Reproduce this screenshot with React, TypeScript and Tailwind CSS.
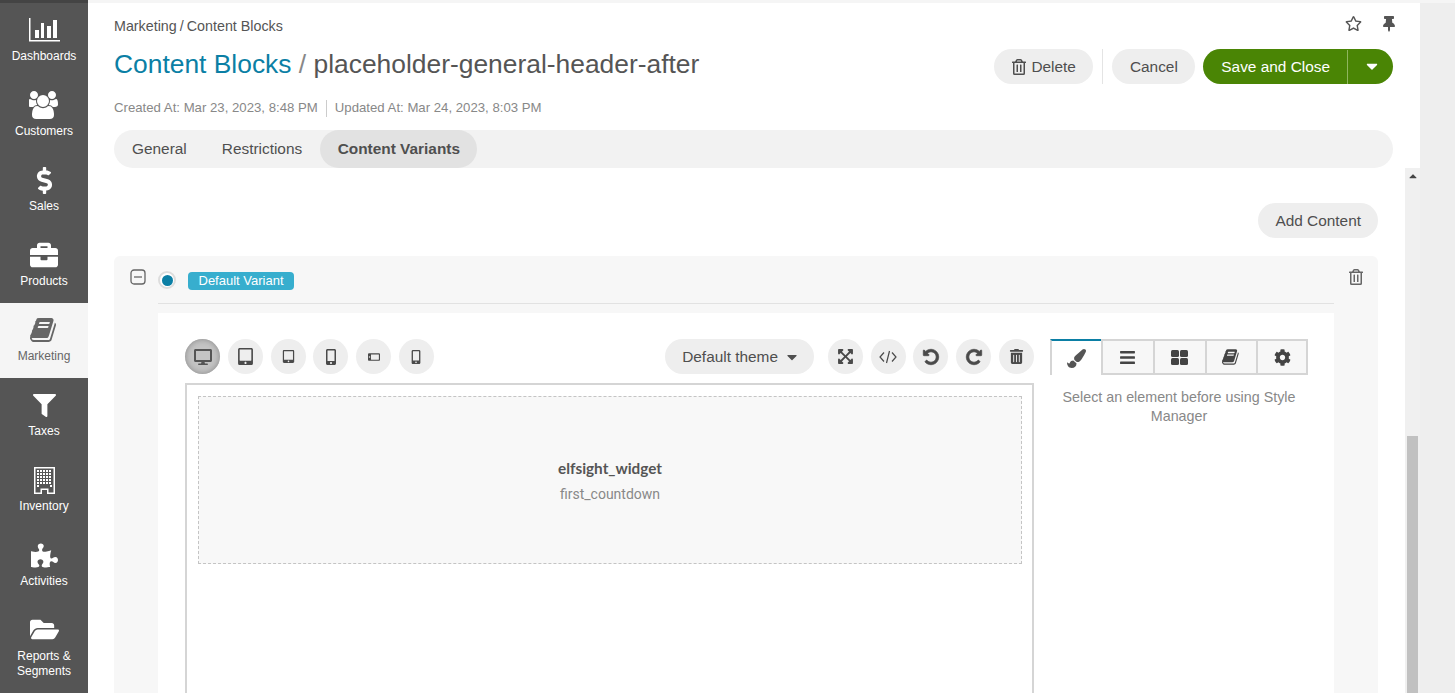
import type { ReactNode } from "react";
import {
  FaBars,
  FaBriefcase,
  FaCaretDown,
  FaCaretUp,
  FaCog,
  FaDesktop,
  FaDollarSign,
  FaExpandArrowsAlt,
  FaFilter,
  FaFolderOpen,
  FaMobileAlt,
  FaPaintBrush,
  FaPuzzlePiece,
  FaRegStar,
  FaRegTrashAlt,
  FaTabletAlt,
  FaThumbtack,
  FaTrashAlt,
} from "react-icons/fa";

function ChartIcon() {
  return (
    <svg width="31" height="24" viewBox="0 0 31 24" fill="currentColor">
      <path d="M0 0h1.5v22H31v1.5H0z" />
      <rect x="6" y="12" width="4" height="8" />
      <rect x="12" y="5" width="3" height="15" />
      <rect x="18" y="8" width="4" height="12" />
      <rect x="24" y="2" width="4" height="18" />
    </svg>
  );
}

function BuildingIcon() {
  const cells = [3, 6, 9, 12, 15];
  return (
    <svg width="21" height="27" viewBox="0 0 21 27" fill="currentColor">
      <path d="M0 0h21v27H13v-4H8v4H0zM1.5 1.5v24H6.5v-4h8v4h5v-24z" />
      {cells.map((x) =>
        cells.map((y) => <rect key={`${x}-${y}`} x={x} y={y} width="2" height="2" />)
      )}
      <rect x="3" y="18" width="2" height="2" />
      <rect x="16" y="18" width="2" height="2" />
    </svg>
  );
}

function CodeIcon() {
  return (
    <svg width="18" height="14" viewBox="0 0 18 14" fill="none" stroke="currentColor" strokeWidth="1.2">
      <path d="M5 2.5 1 7l4 4.5M13 2.5 17 7l-4 4.5M10.5 1 7.5 13" />
    </svg>
  );
}

function CollapseIcon() {
  return (
    <svg width="16" height="16" viewBox="0 0 16 16" fill="none" stroke="currentColor" strokeWidth="1.3">
      <rect x="1" y="1" width="14" height="14" rx="3" />
      <path d="M4 8h8" />
    </svg>
  );
}

function GridIcon() {
  return (
    <svg width="17" height="15" viewBox="0 0 17 15" fill="currentColor">
      <rect width="8" height="7" rx="1.5" />
      <rect x="9" width="8" height="7" rx="1.5" />
      <rect y="8" width="8" height="7" rx="1.5" />
      <rect x="9" y="8" width="8" height="7" rx="1.5" />
    </svg>
  );
}

function BookIcon({ size }: { size: number }) {
  return (
    <svg width={size} height={size} viewBox="0 0 1792 1792" fill="currentColor">
      <path d="M1639 478q40 57 18 129l-275 906q-19 64-76.5 107.5t-122.5 43.5h-923q-77 0-148.5-53.5t-99.5-131.5q-24-67-2-127 0-4 3-27t4-37q1-8-3-21.5t-3-19.5q2-11 8-21t16.5-23.5 16.5-23.5q23-38 45-91.5t30-91.5q3-10 .5-30t-.5-28q3-11 17-28t17-23q21-36 42-92t25-90q1-9-2.5-32t.5-28q4-13 22-30.5t22-22.5q19-26 42.5-84.5t27.5-96.5q1-8-3-25.5t-2-26.5q2-8 9-18t18-23 17-21q8-12 16.5-30.5t15-35 16-36 19.5-32 26.5-23.5 36-11.5 47.5 5.5l-1 3q38-9 51-9h761q74 0 114 56t18 130l-274 906q-36 119-71.5 153.5t-128.5 34.5h-869q-27 0-38 15-11 16-1 43 24 70 144 70h923q29 0 56-15.5t35-41.5l300-987q7-22 5-57 38 15 59 43zm-1064 2q-4 13 2 22.5t20 9.5h608q13 0 25.5-9.5t16.5-22.5l21-64q4-13-2-22.5t-20-9.5h-608q-13 0-25.5 9.5t-16.5 22.5zm-83 256q-4 13 2 22.5t20 9.5h608q13 0 25.5-9.5t16.5-22.5l21-64q4-13-2-22.5t-20-9.5h-608q-13 0-25.5 9.5t-16.5 22.5z" />
    </svg>
  );
}

function UsersIcon() {
  return (
    <svg width="30" height="28" viewBox="0 0 1920 1792" fill="currentColor">
      <path d="M529 896q-162 5-265 128h-134q-82 0-138-40.5t-56-118.5q0-353 124-353 6 0 43.5 21t97.5 42.5 119 21.5q67 0 133-23-5 37-5 66 0 139 81 256zm1071 637q0 120-73 189.5t-194 69.5h-874q-121 0-194-69.5t-73-189.5q0-53 3.5-103.5t14-109 26.5-108.5 43-97.5 62-81 85.5-53.5 111.5-20q10 0 43 21.5t73 48 107 48 135 21.5 135-21.5 107-48 73-48 43-21.5q61 0 111.5 20t85.5 53.5 62 81 43 97.5 26.5 108.5 14 109 3.5 103.5zm-1024-1277q0 106-75 181t-181 75-181-75-75-181 75-181 181-75 181 75 75 181zm704 384q0 159-112.5 271.5t-271.5 112.5-271.5-112.5-112.5-271.5 112.5-271.5 271.5-112.5 271.5 112.5 112.5 271.5zm576 225q0 78-56 118.5t-138 40.5h-134q-103-123-265-128 81-117 81-256 0-29-5-66 66 23 133 23 59 0 119-21.5t97.5-42.5 43.5-21q124 0 124 353zm-128-609q0 106-75 181t-181 75-181-75-75-181 75-181 181-75 181 75 75 181z" />
    </svg>
  );
}

function UndoIcon({ flip }: { flip?: boolean }) {
  return (
    <svg
      width="18"
      height="18"
      viewBox="0 0 1792 1792"
      fill="currentColor"
      stroke="currentColor"
      strokeWidth="70"
      className={flip ? "-scale-x-100" : ""}
    >
      <path d="M1664 896q0 156-61 298t-164 245-245 164-298 61q-172 0-327-72.5t-264-204.5q-7-10-6.5-22.5t8.5-20.5l137-138q10-9 25-9 16 2 23 12 73 95 179 147t225 52q104 0 198.5-40.5t163.5-109.5 109.5-163.5 40.5-198.5-40.5-198.5-109.5-163.5-163.5-109.5-198.5-40.5q-98 0-188 35.5t-160 101.5l137 138q31 30 14 69-17 40-59 40h-448q-26 0-45-19t-19-45v-448q0-42 40-59 39-17 69 14l130 129q107-101 244.5-156.5t284.5-55.5q156 0 298 61t245 164 164 245 61 298z" />
    </svg>
  );
}

const navItems: { label: ReactNode; icon: ReactNode; active?: boolean }[] = [
  { label: "Dashboards", icon: <ChartIcon /> },
  { label: "Customers", icon: <UsersIcon /> },
  { label: "Sales", icon: <FaDollarSign size={27} /> },
  { label: "Products", icon: <FaBriefcase size={28} /> },
  { label: "Marketing", icon: <BookIcon size={28} />, active: true },
  { label: "Taxes", icon: <FaFilter size={23} /> },
  { label: "Inventory", icon: <BuildingIcon /> },
  { label: "Activities", icon: <FaPuzzlePiece size={27} /> },
  { label: <span className="block pt-px">Reports &<br />Segments</span>, icon: <FaFolderOpen size={29} /> },
];

function RoundBtn({ children, pressed }: { children: ReactNode; pressed?: boolean }) {
  return (
    <button
      className={
        pressed
          ? "flex size-[35px] items-center justify-center rounded-full bg-[#c4c4c4] text-[#555] shadow-[inset_0_0_6px_#888]"
          : "flex size-[35px] items-center justify-center rounded-full bg-[#eeeeee] text-[#4a4a4a]"
      }
    >
      {children}
    </button>
  );
}

function PillBtn({ children, className }: { children: ReactNode; className?: string }) {
  return (
    <button className={`flex h-[35px] items-center rounded-full bg-[#eeeeee] pt-px text-[15.4px] text-[#4f4f4f] ${className}`}>
      {children}
    </button>
  );
}

const panelTabs = [
  <FaBars size={17} />,
  <GridIcon />,
  <BookIcon size={18} />,
  <FaCog size={17} />,
];

export default function App() {
  return (
    <div className="flex h-[693px] overflow-hidden bg-[#eeeeee] font-['Liberation_Sans',sans-serif]">
      <aside className="w-[88px] shrink-0 border-t-[3px] border-[#444444] bg-[#555555] text-white">
        {navItems.map((item, i) => (
          <div
            key={i}
            className={
              item.active
                ? "flex h-[75px] flex-col items-center bg-[#f5f5f5] text-[#666666]"
                : "flex h-[75px] flex-col items-center"
            }
          >
            <div className="mt-[12px] flex h-[30px] items-center justify-center">{item.icon}</div>
            <div className="mt-[4px] text-center text-[12px] leading-[15px]">{item.label}</div>
          </div>
        ))}
      </aside>

      <main className="flex w-[1332px] shrink-0 flex-col border-t-[3px] border-[#f5f5f5] bg-white">
        <header className="pl-[26px] pr-[27px]">
          <div className="flex h-[31px] items-end justify-between">
            <div className="text-[14.3px] leading-[16px] text-[#555555]">
              Marketing<span className="mx-[3px]">/</span>Content Blocks
            </div>
            <div className="mb-[2px] flex items-center gap-[19px] text-[#555555]">
              <FaRegStar size={17} />
              <FaThumbtack size={16} className="mr-[-4px] mt-[2px]" />
            </div>
          </div>
          <div className="mt-[15px] flex h-[35px] items-center justify-between">
            <h1 className="pb-[6px] text-[26.4px] leading-[32px] text-[#555555]">
              <span className="text-[#0b7fa5]">Content Blocks</span>
              <span className="text-[#888888]"> / </span>
              placeholder-general-header-after
            </h1>
            <div className="flex items-center">
              <PillBtn className="gap-[4px] px-[17.5px]">
                <FaRegTrashAlt size={16} />
                Delete
              </PillBtn>
              <div className="mx-[9px] h-[35px] w-px bg-[#e4e4e4]" />
              <PillBtn className="px-[17.5px]">Cancel</PillBtn>
              <div className="ml-[8px] flex h-[35px] items-center rounded-full bg-[#4a8505] pt-px text-[15.4px] text-white">
                <span className="pl-[18px] pr-[17px]">Save and Close</span>
                <span className="flex h-full w-[46px] items-center justify-center border-l border-[#8fb65f]">
                  <FaCaretDown size={18} className="mb-[2px] ml-[3px]" />
                </span>
              </div>
            </div>
          </div>
          <div className="mt-[16px] flex h-[16px] items-center text-[13.2px] text-[#888888]">
            <span>Created At: Mar 23, 2023, 8:48 PM</span>
            <span className="mx-[8px] h-[17px] w-px bg-[#cccccc]" />
            <span>Updated At: Mar 24, 2023, 8:03 PM</span>
          </div>
          <nav className="mt-[14px] flex h-[38px] items-center rounded-full bg-[#f2f2f2] text-[15.4px] text-[#4f4f4f]">
            <span className="px-[18px]">General</span>
            <span className="pl-[17px] pr-[18px]">Restrictions</span>
            <span className="flex h-full items-center rounded-full bg-[#e2e2e2] px-[17.5px] font-bold">Content Variants</span>
          </nav>
        </header>

        <div className="flex min-h-0 flex-1">
          <div className="min-w-0 flex-1 overflow-hidden pl-[26px] pr-[27px]">
            <div className="mt-[35px] flex justify-end">
              <PillBtn className="px-[17px]">Add Content</PillBtn>
            </div>
            <section className="mt-[18px] flex h-[600px] rounded-t-[6px] bg-[#f7f7f7]">
              <div className="flex w-[44px] shrink-0 justify-center pl-[3px] pt-[13px] text-[#666666]">
                <CollapseIcon />
              </div>
              <div className="w-[1176px] shrink-0">
                <div className="flex h-[48px] items-start border-b border-[#e2e2e2] pt-[15px]">
                  <span className="flex size-[18px] items-center justify-center rounded-full border-2 border-[#dddddd] bg-white">
                    <span className="size-[11px] rounded-full bg-[#0b7fa5]" />
                  </span>
                  <span className="ml-[12px] mt-px flex h-[18px] items-center rounded-[4px] bg-[#37aece] px-[10.5px] text-[13px] text-white">
                    Default Variant
                  </span>
                </div>
                <div className="mt-[9px] flex h-[400px] gap-[16px] bg-white pl-[27px] pt-[26px]">
                  <div className="w-[849px] shrink-0">
                    <div className="flex items-center justify-between">
                      <div className="flex gap-[7.8px]">
                        <RoundBtn pressed><FaDesktop size={18} /></RoundBtn>
                        <RoundBtn><FaTabletAlt size={17} /></RoundBtn>
                        <RoundBtn><FaTabletAlt size={13} /></RoundBtn>
                        <RoundBtn><FaMobileAlt size={16} /></RoundBtn>
                        <RoundBtn><FaMobileAlt size={12} className="rotate-90" /></RoundBtn>
                        <RoundBtn><FaMobileAlt size={14} /></RoundBtn>
                      </div>
                      <div className="flex items-center gap-[7.8px]">
                        <PillBtn className="mr-[6px] gap-[6px] pl-[17px] pr-[14px]">
                          Default theme
                          <FaCaretDown size={16} />
                        </PillBtn>
                        <RoundBtn><FaExpandArrowsAlt size={17} /></RoundBtn>
                        <RoundBtn><CodeIcon /></RoundBtn>
                        <RoundBtn><UndoIcon /></RoundBtn>
                        <RoundBtn><UndoIcon flip /></RoundBtn>
                        <RoundBtn><FaTrashAlt size={15} /></RoundBtn>
                      </div>
                    </div>
                    <div className="mt-[9px] h-[320px] border-2 border-[#d5d5d5] pb-[11px] pl-[11px] pr-[10px] pt-[11px]">
                      <div className="flex h-[168px] flex-col items-center border border-dashed border-[#c4c4c4] bg-[#f8f8f8] pt-[61px]">
                        <div className="font-['Lato',sans-serif] text-[15.3px] font-bold leading-[20px] text-[#555555]">elfsight_widget</div>
                        <div className="mt-[6px] font-['Roboto',sans-serif] text-[14px] leading-[20px] text-[#888888]">first_countdown</div>
                      </div>
                    </div>
                  </div>
                  <div className="w-[258px] shrink-0">
                    <div className="flex h-[36px]">
                      <div className="flex w-[51px] items-center justify-center border-l-2 border-t-2 border-l-[#d5d5d5] border-t-[#0b7fa5] text-[#555555]">
                        <FaPaintBrush size={19} />
                      </div>
                      {panelTabs.map((icon, i) => (
                        <div
                          key={i}
                          className="flex w-[51.75px] items-center justify-center border-y-2 border-l-2 border-[#d5d5d5] bg-[#f7f7f7] text-[#444444] last:border-r-2"
                        >
                          {icon}
                        </div>
                      ))}
                    </div>
                    <p className="mt-[13px] px-[4px] text-center text-[14.3px] leading-[19px] text-[#888888]">
                      Select an element before using Style Manager
                    </p>
                  </div>
                </div>
              </div>
              <div className="flex flex-1 justify-center pt-[13px] text-[#666666]">
                <FaRegTrashAlt size={16} />
              </div>
            </section>
          </div>
          <div className="flex w-[15px] shrink-0 flex-col items-center bg-[#f0f0f0]">
            <FaCaretUp size={12} className="mt-[2px] text-[#444444]" />
            <div className="mt-[254px] w-[11px] flex-1 bg-[#c1c1c1]" />
          </div>
        </div>
      </main>

      <div className="flex-1 border-t-[3px] border-[#f5f5f5] bg-[#eeeeee]" />
    </div>
  );
}
